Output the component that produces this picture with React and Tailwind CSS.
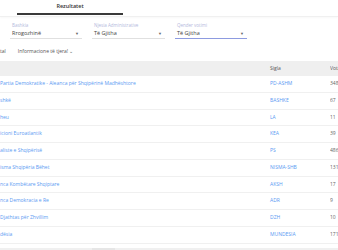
const rows = [
  { name: 'Partia Demokratike - Aleanca për Shqipërinë Madhështore', sigla: 'PD-ASHM', votes: '3489' },
  { name: 'shkë', sigla: 'BASHKE', votes: '67' },
  { name: 'heu', sigla: 'LA', votes: '11' },
  { name: 'icioni Euroatlantik', sigla: 'KEA', votes: '39' },
  { name: 'aliste e Shqipërisë', sigla: 'PS', votes: '4861' },
  { name: 'isma Shqipëria Bëhet', sigla: 'NISMA-SHB', votes: '131' },
  { name: 'nca Kombëtare Shqiptare', sigla: 'AKSH', votes: '17' },
  { name: 'nca Demokracia e Re', sigla: 'ADR', votes: '9' },
  { name: 'Djathtas për Zhvillim', sigla: 'DZH', votes: '10' },
  { name: 'dësia', sigla: 'MUNDESIA', votes: '171' },
]

function Field({ label, value, active = false, width }) {
  return (
    <div className={`flex flex-col ${width}`}>
      <div className="h-[8px] text-[4.5px] leading-[8px] text-[#b3b9dc] pl-[2px]">{label}</div>
      <div className={`h-[10px] flex items-center justify-between pl-[2px] pr-[3px] border-b ${active ? 'border-[#8d9be0]' : 'border-[#e0e0e0]'}`}>
        <span className="text-[5.5px] text-[#444]">{value}</span>
        <span className="text-[4px] text-[#666]">▼</span>
      </div>
    </div>
  )
}

export default function App() {
  return (
    <div className="w-[338px] h-[250px] overflow-hidden bg-white text-[#444]" style={{ fontFamily: '"Open Sans", Lato, sans-serif' }}>
      <div className="h-[17px] border-b border-[#f0f0f0] shadow-[0_1px_2px_rgba(0,0,0,0.03)] pl-[17px]">
        <div className="w-[106px] h-[15px] border-b-2 border-[#3a3a3a] flex items-center justify-center text-[5.5px] font-semibold text-[#333]">
          Rezultatet
        </div>
      </div>

      <div className="flex gap-[10px] pl-[10px] pt-[4px] h-[30px]">
        <Field label="Bashkia" value="Rrogozhinë" width="w-[72px]" />
        <Field label="Njesia Administrative" value="Të Gjitha" width="w-[73px]" />
        <Field label="Qender votimi" value="Të Gjitha" width="w-[72px]" active />
      </div>

      <div className="flex items-center gap-[12px] h-[10px] text-[5px] text-[#555]">
        <span>tal</span>
        <span>Informacione të tjera! ⌄</span>
      </div>

      <div className="mt-[4px]">
        <div className="flex items-center h-[15px] bg-[#efefef] text-[5px] text-[#555]">
          <div className="w-[270px] shrink-0"></div>
          <div className="w-[60px] shrink-0">Sigla</div>
          <div className="flex-1 min-w-0 whitespace-nowrap overflow-hidden">Votat</div>
        </div>
        {rows.map((r) => (
          <div key={r.sigla} className="flex items-center h-[16.75px] border-b border-[#f0f0f0] text-[5px] whitespace-nowrap">
            <div className="w-[270px] shrink-0 text-[#5b9af2]">{r.name}</div>
            <div className="w-[60px] shrink-0 text-[#5b9af2]">{r.sigla}</div>
            <div className="flex-1 min-w-0 overflow-hidden text-[#666]">{r.votes}</div>
          </div>
        ))}
        <div className="h-[4px]"></div>
        <div className="h-[10px] bg-[#f0f0f0] flex">
          <div className="ml-[92px] w-[23px] bg-[#e6e6e6]"></div>
        </div>
      </div>
    </div>
  )
}
